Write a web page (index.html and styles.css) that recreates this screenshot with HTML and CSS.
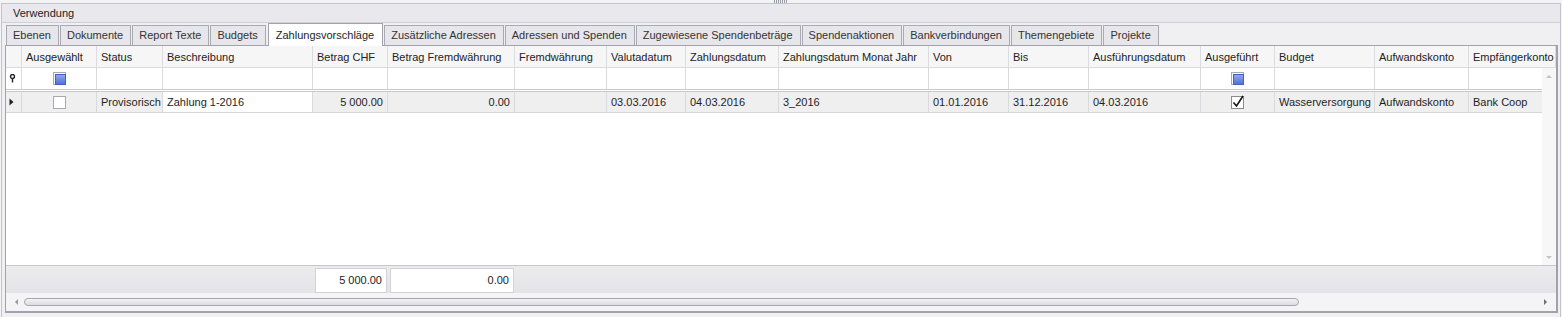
FILE: index.html
```html
<!DOCTYPE html>
<html lang="de">

<head>
	<meta charset="UTF-8">
	<meta name="viewport" content="width=device-width, initial-scale=1.0">
	<title>Verwendung</title>
	<link rel="stylesheet" href="styles.css">
</head>

<body>
	<div class="grip"></div>

	<div class="group">
		<div class="group-title">Verwendung</div>

		<div class="tabs">
			<div class="tab">Ebenen</div>
			<div class="tab">Dokumente</div>
			<div class="tab">Report Texte</div>
			<div class="tab">Budgets</div>
			<div class="tab active">Zahlungsvorschläge</div>
			<div class="tab">Zusätzliche Adressen</div>
			<div class="tab">Adressen und Spenden</div>
			<div class="tab">Zugewiesene Spendenbeträge</div>
			<div class="tab">Spendenaktionen</div>
			<div class="tab">Bankverbindungen</div>
			<div class="tab">Themengebiete</div>
			<div class="tab">Projekte</div>
		</div>

		<div class="grid">
			<div class="row head">
				<div class="cell"></div>
				<div class="cell">Ausgewählt</div>
				<div class="cell">Status</div>
				<div class="cell">Beschreibung</div>
				<div class="cell">Betrag CHF</div>
				<div class="cell">Betrag Fremdwährung</div>
				<div class="cell">Fremdwährung</div>
				<div class="cell">Valutadatum</div>
				<div class="cell">Zahlungsdatum</div>
				<div class="cell">Zahlungsdatum Monat Jahr</div>
				<div class="cell">Von</div>
				<div class="cell">Bis</div>
				<div class="cell">Ausführungsdatum</div>
				<div class="cell">Ausgeführt</div>
				<div class="cell">Budget</div>
				<div class="cell">Aufwandskonto</div>
				<div class="cell">Empfängerkonto</div>
			</div>

			<div class="body">
				<div class="rows">
					<!-- auto filter row -->
					<div class="row filter">
						<div class="cell ind">
							<svg width="7" height="9" viewBox="0 0 7 9"><circle cx="3.5" cy="2.5" r="2" fill="none" stroke="#222" stroke-width="1.4"/><path d="M3.5 4.5v4" stroke="#222" stroke-width="1.4"/></svg>
						</div>
						<div class="cell center"><span class="chk chk-mixed"></span></div>
						<div class="cell"></div>
						<div class="cell"></div>
						<div class="cell"></div>
						<div class="cell"></div>
						<div class="cell"></div>
						<div class="cell"></div>
						<div class="cell"></div>
						<div class="cell"></div>
						<div class="cell"></div>
						<div class="cell"></div>
						<div class="cell"></div>
						<div class="cell center"><span class="chk chk-mixed"></span></div>
						<div class="cell"></div>
						<div class="cell"></div>
						<div class="cell"></div>
					</div>

					<div class="row data">
						<div class="cell ind">
							<svg width="5" height="8" viewBox="0 0 5 8"><path d="M0.5 0.5L4.5 4L0.5 7.5z" fill="#222"/></svg>
						</div>
						<div class="cell center"><span class="chk"></span></div>
						<div class="cell">Provisorisch</div>
						<div class="cell focus">Zahlung 1-2016</div>
						<div class="cell num">5 000.00</div>
						<div class="cell num">0.00</div>
						<div class="cell"></div>
						<div class="cell">03.03.2016</div>
						<div class="cell">04.03.2016</div>
						<div class="cell">3_2016</div>
						<div class="cell">01.01.2016</div>
						<div class="cell">31.12.2016</div>
						<div class="cell">04.03.2016</div>
						<div class="cell center">
							<svg width="14" height="14" viewBox="0 0 14 14"><rect x="0.5" y="1.5" width="12" height="12" fill="#fff" stroke="#8c8c8c"/><path d="M2.5 7.5L5.5 11L12 1" fill="none" stroke="#111" stroke-width="1.6"/></svg>
						</div>
						<div class="cell">Wasserversorgung</div>
						<div class="cell">Aufwandskonto</div>
						<div class="cell">Bank Coop</div>
					</div>
				</div>

				<div class="vscroll">
					<span class="arrow up"></span>
					<span class="arrow down"></span>
				</div>
			</div>

			<div class="row footer">
				<div class="cell"></div>
				<div class="cell"></div>
				<div class="cell"></div>
				<div class="cell"></div>
				<div class="cell"><span class="sum">5 000.00</span></div>
				<div class="cell"><span class="sum">0.00</span></div>
			</div>

			<div class="hscroll">
				<span class="arrow left"></span>
				<div class="track">
					<div class="thumb"></div>
				</div>
				<span class="arrow right"></span>
			</div>
		</div>
	</div>
</body>

</html>
```

FILE: styles.css
```css
* {
	box-sizing: border-box;
}

body {
	margin: 0;
	width: 1562px;
	height: 317px;
	overflow: hidden;
	background: #f4f4f6;
	font-family: "Liberation Sans", Arial, sans-serif;
	font-size: 11px;
	color: #1e1e1e;
}

.grip {
	width: 14px;
	height: 3px;
	margin: 0 auto;
	background: repeating-linear-gradient(90deg, #9a9aa2 0 1px, transparent 1px 2px);
}

.group {
	margin: 0 1px;
	height: 314px;
	border: 1px solid #c4c4cc;
	border-bottom: 0;
	background: #f0f0f3;
}

.group-title {
	height: 19px;
	line-height: 18px;
	padding-left: 11px;
	background: #e9e9ed;
	border-bottom: 1px solid #cfcfd6;
	color: #222;
}

/* tab strip */
.tabs {
	display: flex;
	align-items: flex-end;
	height: 22px;
	padding-left: 4px;
}

.tab {
	height: 20px;
	line-height: 19px;
	padding: 0 7px 0 6px;
	margin-right: 1px;
	background: #e7e7eb;
	border: 1px solid #a9a9b2;
	border-bottom: 0;
	color: #333;
	white-space: nowrap;
}

.tab.active {
	height: 23px;
	line-height: 22px;
	padding: 0 8px 0 7px;
	margin: 0 1px 0 1px;
	background: #fff;
	border-color: #a3a3ac;
	position: relative;
	top: 1px;
	color: #1e1e1e;
}

/* grid */
.grid {
	margin: 0 0 0 3px;
	width: 1553px;
	height: 268px;
	border: 1px solid #a2a2ac;
	border-width: 1px 2px 2px 1px;
	background: #fff;
	display: flex;
	flex-direction: column;
}

.row {
	display: grid;
	grid-template-columns: 16px 75px 66px 150px 75px 127px 92px 79px 93px 150px 80px 80px 112px 74px 100px 94px 87px;
	flex: none;
}

.cell {
	border-right: 1px solid #dadade;
	border-bottom: 1px solid #dadade;
	padding: 0 4px;
	white-space: nowrap;
	overflow: hidden;
	display: flex;
	align-items: center;
}

.head {
	height: 22px;
	background: #f6f6f7;
}

.head .cell {
	border-color: #dcdce0;
	color: #222;
}

.body {
	display: flex;
	height: 197px;
	flex: none;
}

.rows {
	width: 1536px;
	overflow: hidden;
}

.filter {
	height: 24px;
	border-bottom: 3px double #c9c9cf;
}

.filter .cell {
	border-bottom: 0;
}

.data {
	height: 21px;
	background: #efeff0;
}

.data .cell {
	border-bottom-color: #d6d6da;
}

.ind {
	padding: 0 0 0 3px;
}

.center {
	justify-content: center;
}

.num {
	justify-content: flex-end;
}

.focus {
	background: #fff;
}

.chk {
	width: 13px;
	height: 13px;
	border: 1px solid #a8a8b0;
	background: #fff;
	padding: 1px;
}

.chk-mixed::before {
	content: "";
	display: block;
	width: 9px;
	height: 9px;
	border: 1px solid #3f63c4;
	background: linear-gradient(#8fa8ea, #4f73d6);
}

.vscroll {
	width: 14px;
	background: #f7f7f8;
	display: flex;
	flex-direction: column;
	justify-content: space-between;
	align-items: center;
	padding: 7px 0 6px;
}

.arrow {
	width: 0;
	height: 0;
	border: 3px solid transparent;
}

.arrow.up {
	border-bottom: 3px solid #c4c4c8;
	border-top: 0;
}

.arrow.down {
	border-top: 3px solid #c4c4c8;
	border-bottom: 0;
}

.footer {
	height: 28px;
	background: linear-gradient(#ececef, #e4e4e8);
	border-top: 1px solid #c6c6cc;
	padding-top: 2px;
}

.footer .cell {
	border: 0;
	padding: 0 1px 0 2px;
	align-items: stretch;
}

.sum {
	flex: 1;
	background: #fff;
	border: 1px solid #d2d2d8;
	text-align: right;
	padding: 5px 4px 0 0;
	color: #222;
}

.hscroll {
	flex: 1;
	display: flex;
	align-items: center;
	background: #f4f4f6;
	padding: 0 9px 0 9px;
	gap: 6px;
}

.arrow.left {
	border-right: 3px solid #9a9aa0;
	border-left: 0;
}

.arrow.right {
	border-left: 3px solid #6e6e74;
	border-right: 0;
	margin-left: auto;
}

.track {
	flex: 1;
}

.thumb {
	width: 1275px;
	height: 8px;
	border: 1px solid #a6a6ae;
	border-radius: 4px;
	background: linear-gradient(#f4f4f6, #dcdce2);
}
```
